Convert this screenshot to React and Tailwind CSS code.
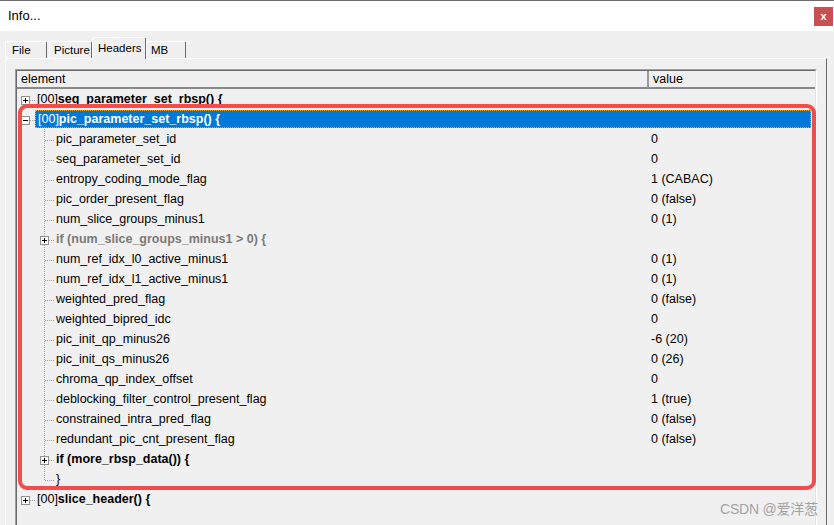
import React from "react";

const rows = [
  { kind: "root", open: false, label: "seq_parameter_set_rbsp() {" },
  { kind: "root", open: true, label: "pic_parameter_set_rbsp() {", selected: true },
  { kind: "leaf", label: "pic_parameter_set_id", value: "0" },
  { kind: "leaf", label: "seq_parameter_set_id", value: "0" },
  { kind: "leaf", label: "entropy_coding_mode_flag", value: "1 (CABAC)" },
  { kind: "leaf", label: "pic_order_present_flag", value: "0 (false)" },
  { kind: "leaf", label: "num_slice_groups_minus1", value: "0 (1)" },
  { kind: "branch", label: "if (num_slice_groups_minus1 > 0) {", gray: true },
  { kind: "leaf", label: "num_ref_idx_l0_active_minus1", value: "0 (1)" },
  { kind: "leaf", label: "num_ref_idx_l1_active_minus1", value: "0 (1)" },
  { kind: "leaf", label: "weighted_pred_flag", value: "0 (false)" },
  { kind: "leaf", label: "weighted_bipred_idc", value: "0" },
  { kind: "leaf", label: "pic_init_qp_minus26", value: "-6 (20)" },
  { kind: "leaf", label: "pic_init_qs_minus26", value: "0 (26)" },
  { kind: "leaf", label: "chroma_qp_index_offset", value: "0" },
  { kind: "leaf", label: "deblocking_filter_control_present_flag", value: "1 (true)" },
  { kind: "leaf", label: "constrained_intra_pred_flag", value: "0 (false)" },
  { kind: "leaf", label: "redundant_pic_cnt_present_flag", value: "0 (false)" },
  { kind: "branch", label: "if (more_rbsp_data()) {" },
  { kind: "last", label: "}" },
  { kind: "root", open: false, label: "slice_header() {" },
];

// little +/- box used by the tree
function ExpandBox({ x, open }) {
  return (
    <g shapeRendering="crispEdges">
      <rect x={x + 0.5} y={7.5} width={8} height={8} fill="#ffffff" stroke="#919191" />
      <line x1={x + 2} y1={11.5} x2={x + 7} y2={11.5} stroke="#000" />
      {!open && <line x1={x + 4.5} y1={9} x2={x + 4.5} y2={14} stroke="#000" />}
    </g>
  );
}

function RootGutter({ open }) {
  return (
    <svg width="18" height="20" className="shrink-0">
      <ExpandBox x={4} open={open} />
      <line x1="13" y1="11.5" x2="18" y2="11.5" stroke="#a0a0a0" strokeDasharray="1 1" />
    </svg>
  );
}

function ChildGutter({ kind }) {
  return (
    <svg width="19" height="20" className="shrink-0">
      <line
        x1="7.5"
        y1="0"
        x2="7.5"
        y2={kind === "last" ? 12 : 20}
        stroke="#a0a0a0"
        strokeDasharray="1 1"
      />
      <line x1="8" y1="11.5" x2="17" y2="11.5" stroke="#a0a0a0" strokeDasharray="1 1" />
      {kind === "branch" && <ExpandBox x={3} />}
    </svg>
  );
}

function Row({ row }) {
  if (row.kind === "root") {
    return (
      <div className="flex h-[20px] items-stretch">
        <RootGutter open={row.open} />
        <div
          className={
            row.selected
              ? "flex-1 mr-[4px] my-[1px] pl-[2px] bg-[#0078d7] text-white border border-dotted border-[#f5a623] flex items-center"
              : "pl-[2px] flex items-center"
          }
        >
          <span>[00]</span>
          <span className="font-bold">{row.label}</span>
        </div>
      </div>
    );
  }
  return (
    <div className="flex h-[20px] items-stretch">
      <div className="w-[632px] flex items-stretch">
        <div className="w-[20px] shrink-0" />
        <ChildGutter kind={row.kind} />
        <div
          className={
            "flex items-center " +
            (row.kind === "branch" ? "font-bold " : "") +
            (row.gray ? "text-[#7a7a7a]" : "")
          }
        >
          {row.label}
        </div>
      </div>
      <div className="pl-[2px] flex items-center">{row.value}</div>
    </div>
  );
}

function Tab({ label, active, className }) {
  if (active) {
    return (
      <div
        className={
          "h-[22px] -mb-[1px] pt-[2px] shrink-0 whitespace-nowrap bg-[#f0f0f0] border-t border-l border-white border-r border-r-[#696969] rounded-t-[2px] relative z-10 " +
          className
        }
      >
        {label}
      </div>
    );
  }
  return (
    <div
      className={
        "h-[17px] leading-[17px] shrink-0 whitespace-nowrap bg-[#f0f0f0] border-t border-l border-white border-r border-r-[#696969] rounded-t-[2px] " +
        className
      }
    >
      {label}
    </div>
  );
}

export default function App() {
  return (
    <div
      className="w-[834px] h-[525px] bg-[#f0f0f0] relative overflow-hidden text-[12.5px] text-black"
      style={{ fontFamily: '"Liberation Sans", "Noto Sans CJK SC", sans-serif' }}
    >
      {/* title bar */}
      <div className="h-[31px] bg-white border-t border-[#6b6b6b] flex items-center justify-between pl-[8px] pr-[1px]">
        <span className="text-[13px]">Info...</span>
        <div className="w-[19px] h-[19px] bg-[#c75050] text-white text-[11px] font-bold flex items-center justify-center leading-none">
          x
        </div>
      </div>

      {/* tabs */}
      <div className="flex items-end pl-[5px] h-[27px] text-[11.5px]">
        <Tab label="File" className="w-[42px] pl-[6px]" />
        <Tab label="Picture" className="w-[43px] ml-[2px] pl-[4px]" />
        <Tab label="Headers" active className="w-[54px] pl-[5px]" />
        <Tab label="MB" className="w-[40px] pl-[4px]" />
      </div>

      {/* tab panel */}
      <div className="ml-[5px] w-[822px] h-[470px] border-t border-l border-white border-r border-r-[#696969] pt-[10px] pl-[9px]">
        {/* list view */}
        <div className="w-[802px] h-[460px] border-t border-l border-[#a0a0a0] border-r border-r-white">
          <div className="h-full border-t border-l border-[#696969] border-r border-r-[#e3e3e3]">
            <div className="flex h-[18px] border-b-2 border-[#8a8a8a] bg-[#f0f0f0]">
              <div className="w-[632px] pl-[4px] leading-[16px] border-r-2 border-r-[#9a9a9a]">element</div>
              <div className="pl-[4px] leading-[16px]">value</div>
            </div>
            {rows.map((r, i) => (
              <Row key={i} row={r} />
            ))}
          </div>
        </div>
      </div>

      {/* annotation box */}
      <div className="absolute left-[18px] top-[104px] w-[798px] h-[386px] border-[4px] border-[#f24c4c] rounded-[9px] pointer-events-none" />

      {/* watermark */}
      <div className="absolute left-[720px] top-[499px] text-[14px] text-[#a3a3a3] tracking-[-0.2px]">
        CSDN @爱洋葱
      </div>
    </div>
  );
}
